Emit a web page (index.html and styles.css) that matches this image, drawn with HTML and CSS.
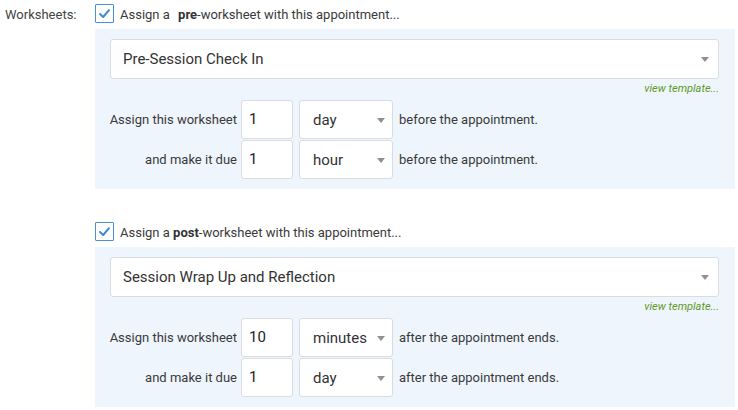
FILE: index.html
```html
<!DOCTYPE html>
<html>
<head>
<meta charset="utf-8">
<link rel="stylesheet" href="styles.css">
</head>
<body>
<div class="form-row">
  <div class="field-label">Worksheets:</div>
  <div class="field-body">
    <section class="ws-block">
      <label class="check-line">
        <span class="checkbox"><svg viewBox="0 0 19 19" width="19" height="19"><path d="M5 10 L8.2 13 L14 6.2" fill="none" stroke="#3a8ad8" stroke-width="2" stroke-linecap="round" stroke-linejoin="round"/></svg></span>
        <span class="check-text">Assign a <b class="kw kw-wide">pre</b>-worksheet with this appointment...</span>
      </label>
      <div class="panel">
        <div class="select select-wide"><span>Pre-Session Check In</span><i class="caret"></i></div>
        <div class="template-link">view template...</div>
        <div class="timing-row">
          <span class="row-label">Assign this worksheet</span>
          <div class="num-input">1</div>
          <div class="select select-unit"><span>day</span><i class="caret"></i></div>
          <span class="row-tail">before the appointment.</span>
        </div>
        <div class="timing-row">
          <span class="row-label">and make it due</span>
          <div class="num-input">1</div>
          <div class="select select-unit"><span>hour</span><i class="caret"></i></div>
          <span class="row-tail">before the appointment.</span>
        </div>
      </div>
    </section>

    <section class="ws-block ws-block-post">
      <label class="check-line">
        <span class="checkbox"><svg viewBox="0 0 19 19" width="19" height="19"><path d="M5 10 L8.2 13 L14 6.2" fill="none" stroke="#3a8ad8" stroke-width="2" stroke-linecap="round" stroke-linejoin="round"/></svg></span>
        <span class="check-text">Assign a <b class="kw">post</b>-worksheet with this appointment...</span>
      </label>
      <div class="panel">
        <div class="select select-wide"><span>Session Wrap Up and Reflection</span><i class="caret"></i></div>
        <div class="template-link">view template...</div>
        <div class="timing-row">
          <span class="row-label">Assign this worksheet</span>
          <div class="num-input">10</div>
          <div class="select select-unit"><span>minutes</span><i class="caret"></i></div>
          <span class="row-tail">after the appointment ends.</span>
        </div>
        <div class="timing-row">
          <span class="row-label">and make it due</span>
          <div class="num-input">1</div>
          <div class="select select-unit"><span>day</span><i class="caret"></i></div>
          <span class="row-tail">after the appointment ends.</span>
        </div>
      </div>
    </section>
  </div>
</div>
</body>
</html>
```

FILE: styles.css
```css
html, body {
  margin: 0;
  padding: 0;
  background: #ffffff;
}
body {
  font-family: Roboto, "Liberation Sans", Arial, sans-serif;
  font-size: 13px;
  color: #3a3a3a;
  width: 738px;
  height: 410px;
  overflow: hidden;
}
.form-row {
  display: flex;
  align-items: flex-start;
}
.field-label {
  width: 90px;
  padding-left: 5px;
  padding-top: 6px;
  line-height: 18px;
  color: #444;
}
.field-body {
  width: 640px;
}
.ws-block {
  padding-top: 4px;
}
.ws-block-post {
  padding-top: 33px;
}
.check-line {
  display: flex;
  align-items: center;
  height: 19px;
  margin-bottom: 6px;
}
.checkbox {
  box-sizing: border-box;
  width: 19px;
  height: 19px;
  border: 1px solid #4a90d9;
  border-radius: 1px;
  background: #fff;
  position: relative;
  flex: none;
}
.checkbox svg {
  position: absolute;
  left: -1px;
  top: -1px;
}
.check-text {
  margin-left: 6px;
  padding-top: 2px;
  color: #3a3a3a;
}
.kw {
  font-weight: 700;
  color: #333;
}
.kw-wide {
  margin-left: 5px;
}
.panel {
  background: #eef5fc;
  padding: 10px 16px 10px 15px;
}
.select {
  box-sizing: border-box;
  background: #fff;
  border: 1px solid #d9dde2;
  border-radius: 3px;
  display: flex;
  align-items: center;
  justify-content: space-between;
  color: #333;
  font-size: 15px;
}
.select-wide {
  height: 40px;
  padding: 0 9px 0 12px;
}
.caret {
  width: 0;
  height: 0;
  border-left: 4px solid transparent;
  border-right: 4px solid transparent;
  border-top: 5px solid #909090;
  margin-top: 1px;
}
.template-link {
  text-align: right;
  font-style: italic;
  font-size: 11px;
  line-height: 14px;
  color: #5f9a25;
  margin: 3px 0 4px;
}
.timing-row {
  display: flex;
  align-items: center;
  height: 39px;
  margin-bottom: 1px;
}
.timing-row:last-child {
  margin-bottom: 0;
}
.row-label {
  width: 127px;
  flex: none;
  display: flex;
  justify-content: flex-end;
  white-space: nowrap;
  color: #3a3a3a;
}
.num-input {
  box-sizing: border-box;
  flex: none;
  width: 52px;
  height: 39px;
  margin-left: 4px;
  background: #fff;
  border: 1px solid #d9dde2;
  border-radius: 3px;
  padding-left: 7px;
  line-height: 37px;
  font-size: 15px;
  color: #222;
}
.select-unit {
  flex: none;
  width: 94px;
  height: 39px;
  margin-left: 6px;
  padding: 0 7px 0 13px;
}
.row-tail {
  margin-left: 6px;
  white-space: nowrap;
  color: #3a3a3a;
}
```
